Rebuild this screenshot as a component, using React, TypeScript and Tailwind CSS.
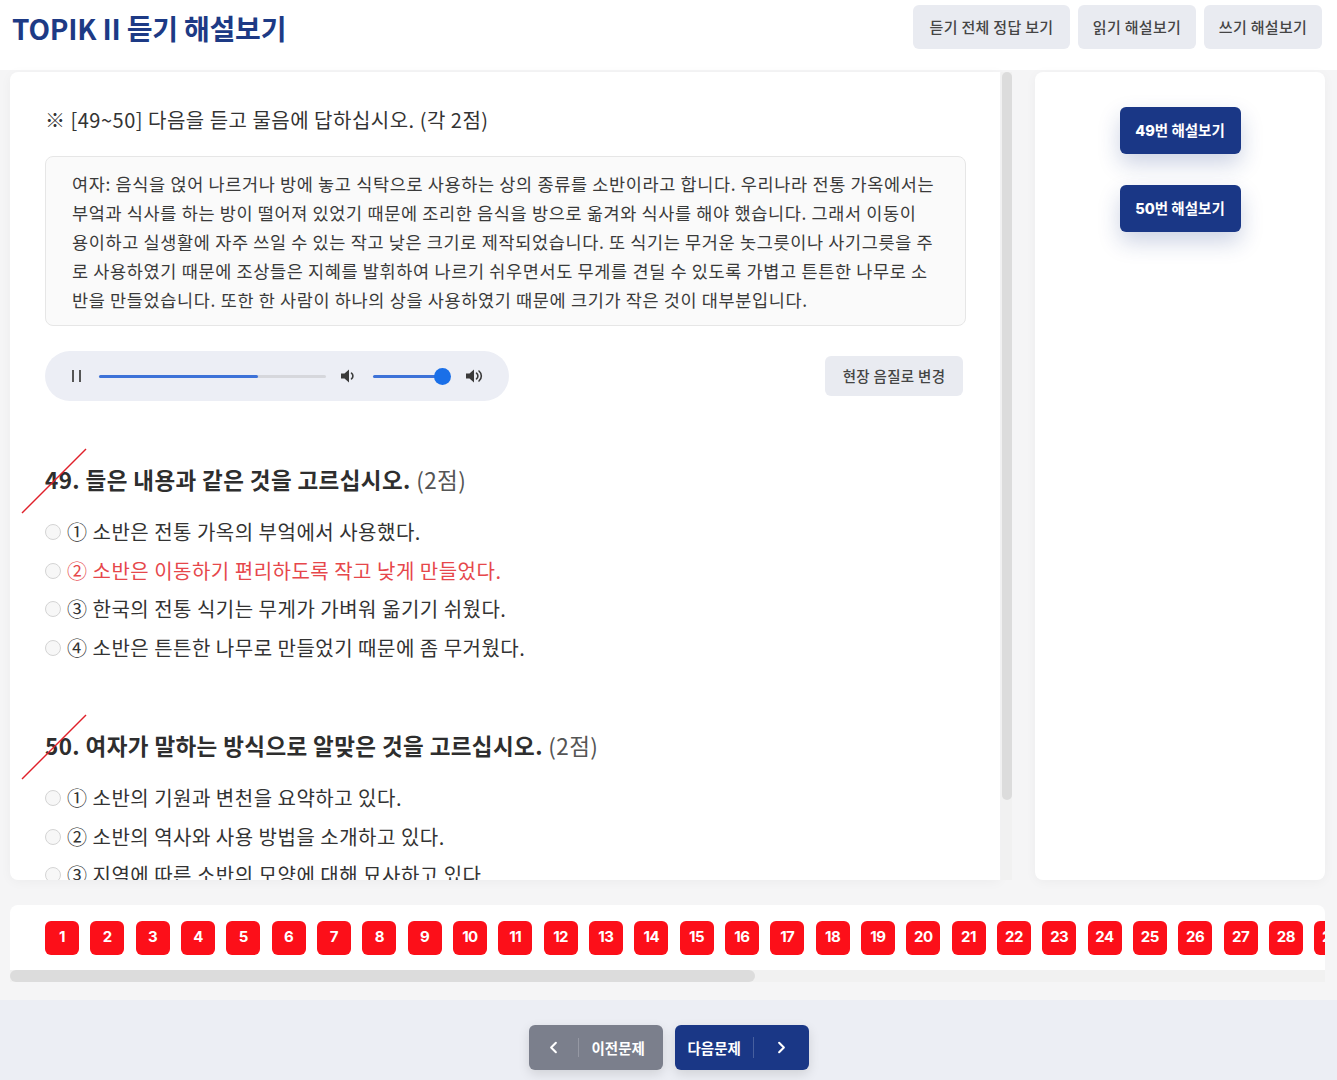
import { ChevronLeft, ChevronRight } from "lucide-react";

const kr = "font-['Noto_Sans_CJK_KR','Noto_Sans',sans-serif]";

const transcript = [
  "여자: 음식을 얹어 나르거나 방에 놓고 식탁으로 사용하는 상의 종류를 소반이라고 합니다. 우리나라 전통 가옥에서는",
  "부엌과 식사를 하는 방이 떨어져 있었기 때문에 조리한 음식을 방으로 옮겨와 식사를 해야 했습니다. 그래서 이동이",
  "용이하고 실생활에 자주 쓰일 수 있는 작고 낮은 크기로 제작되었습니다. 또 식기는 무거운 놋그릇이나 사기그릇을 주",
  "로 사용하였기 때문에 조상들은 지혜를 발휘하여 나르기 쉬우면서도 무게를 견딜 수 있도록 가볍고 튼튼한 나무로 소",
  "반을 만들었습니다. 또한 한 사람이 하나의 상을 사용하였기 때문에 크기가 작은 것이 대부분입니다.",
];

const questions = [
  {
    no: "49",
    title: "들은 내용과 같은 것을 고르십시오.",
    options: [
      "① 소반은 전통 가옥의 부엌에서 사용했다.",
      "② 소반은 이동하기 편리하도록 작고 낮게 만들었다.",
      "③ 한국의 전통 식기는 무게가 가벼워 옮기기 쉬웠다.",
      "④ 소반은 튼튼한 나무로 만들었기 때문에 좀 무거웠다.",
    ],
    answer: 1,
  },
  {
    no: "50",
    title: "여자가 말하는 방식으로 알맞은 것을 고르십시오.",
    options: [
      "① 소반의 기원과 변천을 요약하고 있다.",
      "② 소반의 역사와 사용 방법을 소개하고 있다.",
      "③ 지역에 따른 소반의 모양에 대해 묘사하고 있다.",
      "④ 소반의 종류와 특징을 비교하여 설명하고 있다.",
    ],
    answer: -1,
  },
];

function Speaker({ loud }: { loud?: boolean }) {
  return (
    <svg width="20" height="16" viewBox="0 0 20 16" className="text-[#3a3a3a]">
      <path d="M1 5.5h3.5L9 1.5v13L4.5 10.5H1z" fill="currentColor" />
      <path d="M11.5 5.2a3.5 3.5 0 0 1 0 5.6" stroke="currentColor" strokeWidth="1.6" fill="none" strokeLinecap="round" />
      {loud && (
        <path d="M14 3a6.5 6.5 0 0 1 0 10" stroke="currentColor" strokeWidth="1.6" fill="none" strokeLinecap="round" />
      )}
    </svg>
  );
}

function Slash() {
  return (
    <svg
      width="66"
      height="66"
      viewBox="0 0 66 66"
      className="pointer-events-none absolute left-[-24px] top-[-15px]"
    >
      <line x1="1" y1="65" x2="65" y2="1" stroke="#e0202a" strokeWidth="1.4" />
    </svg>
  );
}

export default function App() {
  return (
    <div className={`${kr} flex h-[1080px] w-[1337px] flex-col overflow-hidden bg-[#f5f5f6]`}>
      {/* header */}
      <header className="flex h-[70px] shrink-0 items-start justify-between bg-white pl-3 pr-[15px]">
        <h1 className="mt-[11px] text-[28px] font-bold leading-[34px] tracking-[-0.2px] text-[#1d3a85]">
          TOPIK II 듣기 해설보기
        </h1>
        <div className="mt-[5px] flex gap-2">
          {[
            { t: "듣기 전체 정답 보기", w: "w-[157px]" },
            { t: "읽기 해설보기", w: "w-[118px]" },
            { t: "쓰기 해설보기", w: "w-[118px]" },
          ].map((b) => (
            <button
              key={b.t}
              className={`h-[44px] ${b.w} rounded-md bg-[#e9ebf1] text-[15px] font-medium tracking-[0.3px] text-[#454545]`}
            >
              {b.t}
            </button>
          ))}
        </div>
      </header>

      {/* main */}
      <div className="flex h-[810px] shrink-0 pl-[10px] pr-[12px] pt-[2px]">
        <div className="flex h-[808px] w-[990px] flex-col overflow-hidden rounded-l-lg bg-white pl-[35px] pr-[34px] pt-[34px] shadow-[0_2px_12px_rgba(0,0,0,0.04)]">
          <p className="text-[20px] leading-[28px] tracking-[0.5px] text-[#333]">
            ※ [49~50] 다음을 듣고 물음에 답하십시오. (각 2점)
          </p>

          <div className="mt-[22px] rounded-lg border border-[#e6e6e6] bg-[#fafafa] pb-[11px] pl-[26px] pt-[12px]">
            {transcript.map((l) => (
              <p key={l} className="whitespace-nowrap text-[17.5px] leading-[29px] tracking-[0.65px] text-[#3a3a3a]">
                {l}
              </p>
            ))}
          </div>

          <div className="mt-[25px] flex items-center justify-between">
            <div className="flex h-[50px] w-[464px] items-center rounded-full bg-[#eceef5] pl-[27px]">
              <div className="flex gap-[5px]">
                <span className="h-[12px] w-[2px] bg-[#555]" />
                <span className="h-[12px] w-[2px] bg-[#555]" />
              </div>
              <div className="ml-[18px] h-[3px] w-[227px] rounded bg-[#d6d7dc]">
                <div className="h-full w-[70%] rounded bg-[#3d72d8]" />
              </div>
              <div className="ml-[14px]">
                <Speaker />
              </div>
              <div className="relative ml-[13px] h-[3px] w-[70px] rounded bg-[#3d72d8]">
                <span className="absolute right-[-8px] top-[-7px] h-[17px] w-[17px] rounded-full bg-[#1a6fe8]" />
              </div>
              <div className="ml-[22px]">
                <Speaker loud />
              </div>
            </div>
            <button className="mr-[3px] h-[40px] w-[138px] rounded-md bg-[#e9ebf1] text-[14.5px] font-medium tracking-[0.3px] text-[#444]">
              현장 음질로 변경
            </button>
          </div>

          {questions.map((q) => (
            <div key={q.no} className="mt-[62px]">
              <div className="relative">
                <Slash />
                <p className="text-[22.5px] leading-[32px] tracking-[0.4px] text-[#2e2e2e]">
                  <span className="font-bold">
                    {q.no}. {q.title}
                  </span>{" "}
                  <span className="text-[#555]">(2점)</span>
                </p>
              </div>
              <div className="mt-[18px]">
                {q.options.map((o, i) => (
                  <div key={o} className="flex h-[38.5px] items-center gap-[6px]">
                    <span className="h-[16px] w-[16px] shrink-0 rounded-full border border-[#d4d4d4] bg-[#f7f7f7]" />
                    <span
                      className={`whitespace-nowrap text-[20px] leading-[28px] tracking-[0.5px] ${
                        i === q.answer ? "text-[#e6474b]" : "text-[#333]"
                      }`}
                    >
                      {o}
                    </span>
                  </div>
                ))}
              </div>
            </div>
          ))}
        </div>

        {/* vertical scrollbar */}
        <div className="ml-[1px] flex h-[808px] w-[11px] justify-center bg-[#f1f1f1]">
          <div className="h-[728px] w-[10px] rounded-full bg-[#dcdcdc]" />
        </div>

        <div className="ml-[23px] flex h-[808px] flex-1 flex-col items-center gap-[31px] rounded-lg bg-white pt-[35px] shadow-[0_2px_12px_rgba(0,0,0,0.04)]">
          {["49", "50"].map((n) => (
            <button
              key={n}
              className="h-[47px] w-[121px] rounded-md bg-[#1a3786] text-[14.5px] font-bold text-white shadow-[0_10px_22px_rgba(26,55,134,0.22)]"
            >
              <span className="font-['Inter',sans-serif] font-extrabold">{n}</span>번 해설보기
            </button>
          ))}
        </div>
      </div>

      {/* number strip */}
      <div className="ml-[10px] mt-[25px] w-[1315px] shrink-0 overflow-hidden rounded-t-lg bg-white">
        <div className="flex h-[65px] items-center gap-[11.33px] pl-[35px]">
          {Array.from({ length: 30 }, (_, i) => (
            <span
              key={i}
              className="flex h-[34px] w-[34px] shrink-0 items-center justify-center rounded-md bg-[#fc0f19] font-['Inter',sans-serif] text-[15px] font-bold tracking-[-0.5px] text-white"
            >
              {i + 1}
            </span>
          ))}
        </div>
        <div className="h-[12px] bg-[#f1f1f1]">
          <div className="h-full w-[745px] rounded-full bg-[#dcdcdc]" />
        </div>
      </div>

      {/* footer */}
      <footer className="mt-[18px] flex flex-1 items-start justify-center gap-[12px] bg-[#eceef4] pt-[25px]">
        <button className="flex h-[45px] w-[134px] items-center rounded-md bg-[#7b7f8c] text-white shadow-[0_4px_12px_rgba(0,0,0,0.12)]">
          <span className="flex w-[50px] justify-center border-r border-white/20">
            <ChevronLeft size={19} strokeWidth={2.6} />
          </span>
          <span className="ml-[13px] text-[14.5px] font-semibold">이전문제</span>
        </button>
        <button className="flex h-[45px] w-[134px] items-center rounded-md bg-[#1a3786] text-white shadow-[0_4px_12px_rgba(0,0,0,0.12)]">
          <span className="ml-[13px] border-r border-white/20 pr-[12px] text-[14.5px] font-semibold">다음문제</span>
          <span className="flex flex-1 justify-center">
            <ChevronRight size={19} strokeWidth={2.6} />
          </span>
        </button>
      </footer>
    </div>
  );
}
